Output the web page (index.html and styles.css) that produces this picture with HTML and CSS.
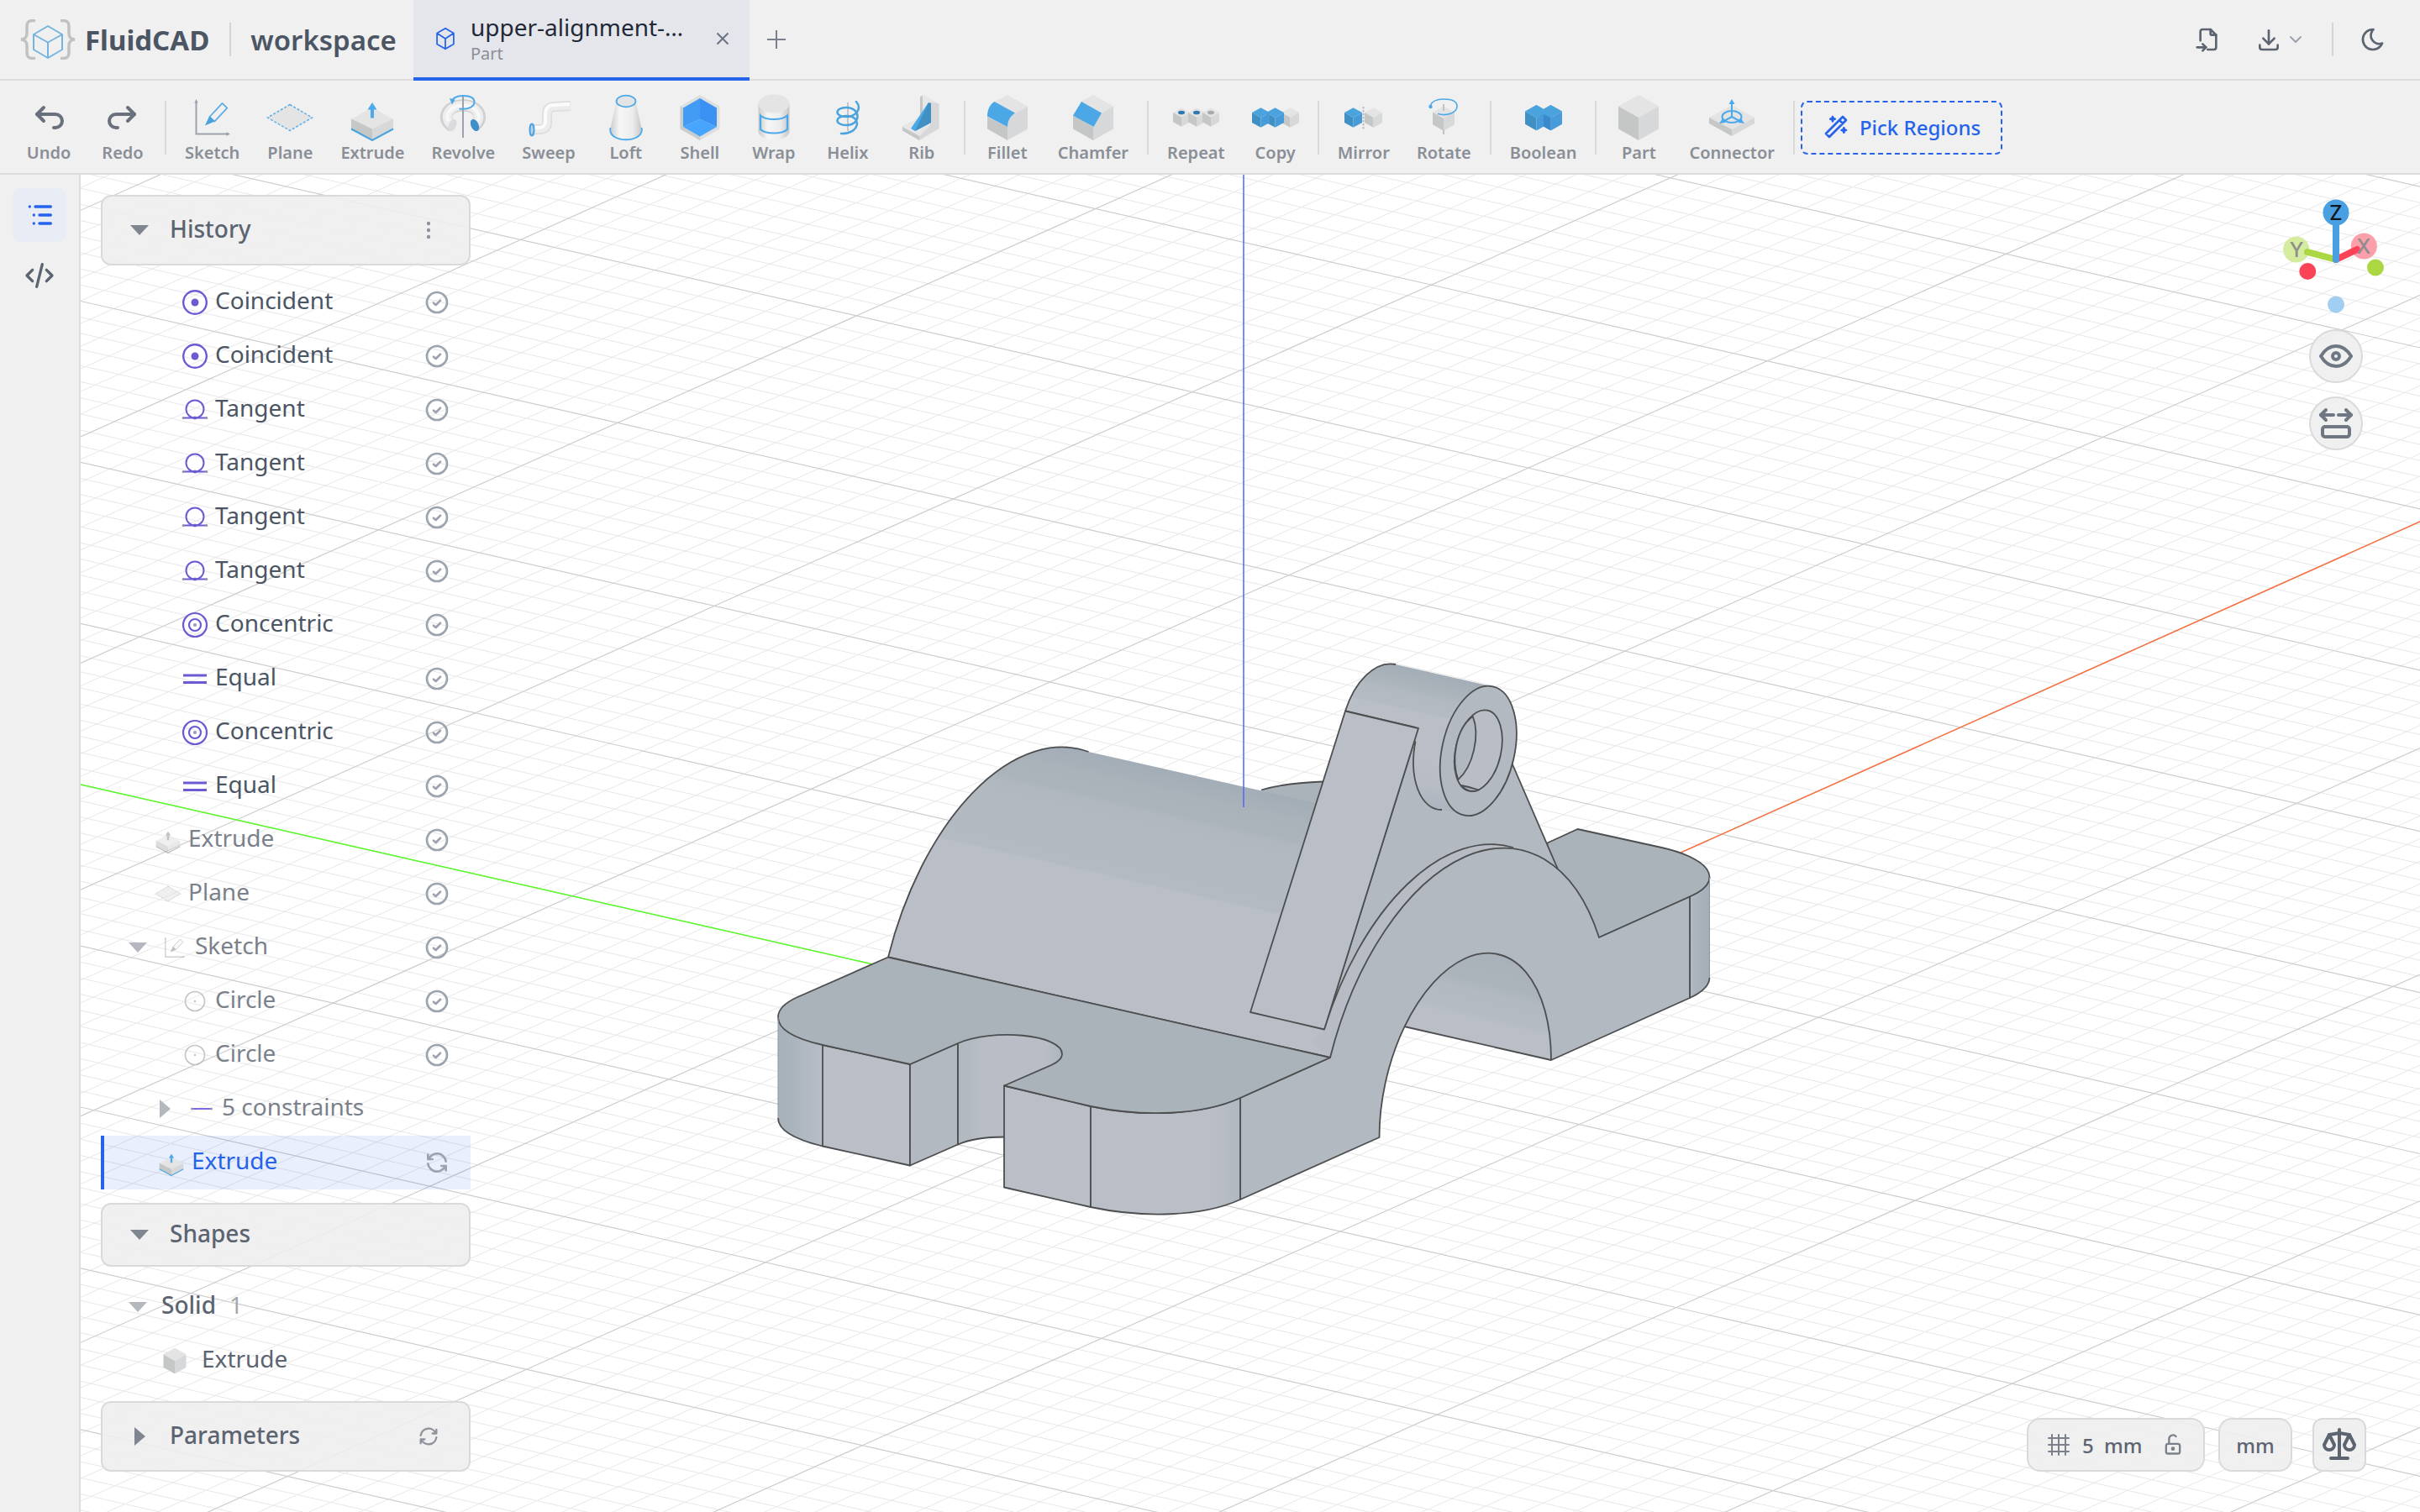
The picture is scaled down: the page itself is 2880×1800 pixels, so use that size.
FILE: index.html
```html
<!DOCTYPE html>
<html lang="en">
<head>
<meta charset="utf-8">
<title>FluidCAD – workspace</title>
<link rel="stylesheet" href="styles.css">
</head>
<body>
<svg class="sprite" aria-hidden="true">
  <defs>
    <linearGradient id="tube" x1="0" y1="0" x2="1" y2="0"><stop offset="0" stop-color="#c9cacb"/><stop offset=".3" stop-color="#f6f6f6"/><stop offset=".7" stop-color="#ededee"/><stop offset="1" stop-color="#c4c5c6"/></linearGradient>
  </defs>
  <symbol id="cube" viewBox="0 0 48 54"><path fill="#e4e4e5" d="M24 0l24 13.500-24 13.500-24-13.500z"/><path fill="#c5c7c7" d="M0 13.500l24 13.500v27L0 40.500z"/><path fill="#d7d8da" d="M48 13.500L24 27v27l24-13.500z"/></symbol>
  <symbol id="cube-blue" viewBox="0 0 48 54"><path fill="#4ba3de" d="M24 0l24 13.500-24 13.500-24-13.500z"/><path fill="#4190c4" d="M0 13.500l24 13.500v27L0 40.500z"/><path fill="#479bd8" d="M48 13.500L24 27v27l24-13.500z"/></symbol>
  <symbol id="undo" viewBox="0 0 24 24"><g class="line"><path d="M9 14l-4-4 4-4"/><path d="M5 10h11a4 4 0 1 1 0 8h-1"/></g></symbol>
  <symbol id="redo" viewBox="0 0 24 24"><g class="line"><path d="M15 14l4-4-4-4"/><path d="M19 10H8a4 4 0 1 0 0 8h1"/></g></symbol>
  <symbol id="sketch" viewBox="0 0 56 56"><g fill="none" stroke="#9ca1ab" stroke-width="2"><path d="M8.500 9v38.500H47"/></g><path fill="#9ca1ab" d="M8.500 6l2.200 4.500H6.300zM49 47.500l-4.500 2.200v-4.400z"/><path fill="none" stroke="#5aabe4" stroke-width="1.700" stroke-linejoin="round" d="M24.500 27l15-16.200 5.800 5.800-15 16z"/><path fill="#4ba3de" d="M19 37.500l5.200-11.500 6.500 6.500z"/></symbol>
  <symbol id="plane" viewBox="0 0 56 56"><path fill="#e4e4e5" stroke="#63b0e6" stroke-width="1.600" stroke-dasharray="3 2" d="M28 12.500L54.500 28 28 43.500 1.500 28z"/></symbol>
  <symbol id="extrude" viewBox="0 0 56 56"><path fill="#e4e4e5" d="M28 16l25 14-25 13L3 30z"/><path fill="#c5c7c7" d="M3 29.500L28 41.500V55L3 41.500z"/><path fill="#d7d8da" d="M53 29.500L28 41.500V55l25-13.500z"/><path fill="none" stroke="#4ba3de" stroke-width="2" d="M3 41.500L28 55l25-13.500"/><path fill="#4ca9ea" d="M28 10l5.500 8.500H30V28.500h-4V18.500h-3.500z"/></symbol>
  <symbol id="revolve" viewBox="0 0 56 56"><path fill="none" stroke="#cfd0d1" stroke-width="14.500" d="M15 38C2 30 8 13.500 28 13.500S54 30 41 38"/><path fill="none" stroke="#ededee" stroke-width="11" d="M15 37C4 30 9 13.500 28 13.500S52 30 41 37"/><path fill="none" stroke="#f8f8f8" stroke-width="4" d="M11 32C6 26 12 13.500 28 13.500S50 26 45 32"/><ellipse cx="15.500" cy="37" rx="4.500" ry="7.500" transform="rotate(25 15.500 37)" fill="#dadbdc"/><ellipse cx="42" cy="37" rx="4.500" ry="7.500" transform="rotate(-25 42 37)" fill="#3f8fc9"/><path stroke="#9ca1ab" stroke-width="2" d="M28 3v49"/><path fill="none" stroke="#4ca9ea" stroke-width="2" d="M23.500 17.500C34 19 41.500 15 41.500 9.500S36 2 28 2 15 5 15 9.500"/><path fill="#4ca9ea" d="M12 5l6.500 1.500-3.500 6z"/></symbol>
  <symbol id="sweep" viewBox="0 0 56 56"><path fill="none" stroke="#dcdcdd" stroke-width="12" d="M7 42h9c8 0 10-3 10-9v-8c0-7 3-10 10-10l18-1"/><path fill="none" stroke="#ececed" stroke-width="9" d="M7 42h9c8 0 10-3 10-9v-8c0-7 3-10 10-10l18-1"/><path fill="none" stroke="#fbfbfb" stroke-width="4" d="M7 40h8c7 0 9-3 9-8v-8c0-8 4-11 11-11l18-1"/><ellipse cx="8" cy="42.500" rx="2.500" ry="7" fill="#bcd3e4" stroke="#4ba3de" stroke-width="2"/></symbol>
  <symbol id="loft" viewBox="0 0 56 56"><path fill="url(#tube)" d="M16.500 9L9 43c0 15 38 15 38 0L39.500 9z"/><path fill="none" stroke="#4ca9ea" stroke-width="1.800" d="M9.500 40C5 59 51 59 46.500 40"/><ellipse cx="28" cy="8.500" rx="11.500" ry="6.800" fill="#e4e4e5" stroke="#4ca9ea" stroke-width="1.800"/></symbol>
  <symbol id="shell" viewBox="0 0 56 56"><path fill="#dddedf" d="M28 1l23.500 13.500v27L28 55 4.500 41.500v-27z"/><path fill="#cbcdcd" d="M4.500 14.500L8 16.500V39l20 11.500V55L4.500 41.500z"/><path fill="#439cf3" d="M28 5v25L8 39V16.500z"/><path fill="#3c92f3" d="M28 5l20 11.500V39L28 30z"/><path fill="#48a5fd" d="M28 30l20 9-20 11.500L8 39z"/></symbol>
  <symbol id="wrap" viewBox="0 0 56 56"><path fill="url(#tube)" d="M9.500 12v32c0 14 37 14 37 0V12z"/><ellipse cx="28" cy="11.500" rx="18.500" ry="11" fill="#e4e4e5"/><path fill="none" stroke="#4ca9ea" stroke-width="2.200" d="M12 25.500c6 6 26 6 32 0V42c-6 6-26 6-32 0z"/></symbol>
  <symbol id="helix" viewBox="0 0 56 56"><path stroke="#c3c5c8" stroke-width="2" d="M28 10v34"/><path fill="none" stroke="#4ba3de" stroke-width="2.500" stroke-linecap="round" d="M38 9c7 8 0 18-12 18-14 0-14-11 0-11 18 0 18 21 0 21-14 0-14-11 0-11 20 0 16 22-6 21"/></symbol>
  <symbol id="rib" viewBox="0 0 56 56"><path fill="#e7e7e8" d="M30 1l18.500 10.500v29L25 55 5 43.500v-5L26 27V3.500z"/><path fill="#c5c7c7" d="M26 3.500l3-2V26l-3 2zM5 39l20 11v5L5 43.500z"/><path fill="#d7d8da" d="M48.500 11.500L38 9v28l-13 13v5l23.500-14z"/><path fill="#4ca9e8" d="M36 10l1 25-17 9-5-3z"/><path fill="#4190c4" d="M36 10l3 1v23L20 44z"/></symbol>
  <symbol id="fillet" viewBox="0 0 56 56"><path fill="#e4e4e5" d="M28 1l24 13.500L37 23 12 9.500z"/><path fill="#c5c7c7" d="M4 27l24 12v16L4 41.500z"/><path fill="#d7d8da" d="M52 14.500L37 23c-6 4-9 9-9 16v16l24-13.500z"/><path fill="#4ba7e6" d="M12.500 9L37 22.500C31 27 28 32 28 39L4 26.500C4 19 7 12 12.500 9z"/></symbol>
  <symbol id="chamfer" viewBox="0 0 56 56"><path fill="#e4e4e5" d="M28 1l24 13.500L37 23 12 9.500z"/><path fill="#c5c7c7" d="M4 25l24 14v16L4 41.500z"/><path fill="#d7d8da" d="M52 14.500L37 23l-9 16v16l24-13.500z"/><path fill="#4ba7e6" d="M14 9l24 13.500L28.500 39 4 25.500z"/></symbol>
  <symbol id="repeat" viewBox="0 0 56 56"><use href="#cube" x="1" y="16" width="20" height="23"/><use href="#cube" x="19" y="16" width="20" height="23"/><use href="#cube" x="36" y="16" width="20" height="23"/><g fill="#2d79b0"><ellipse cx="11" cy="22" rx="4" ry="2.300"/><ellipse cx="29" cy="22" rx="4" ry="2.300"/></g><ellipse cx="46" cy="22" rx="4" ry="2.300" fill="#a9aaab"/></symbol>
  <symbol id="copy" viewBox="0 0 56 56"><use href="#cube" x="35" y="16" width="21" height="24"/><use href="#cube-blue" x="17" y="16" width="21" height="24"/><use href="#cube-blue" x="0" y="16" width="21" height="24"/></symbol>
  <symbol id="mirror" viewBox="0 0 56 56"><use href="#cube-blue" x="5" y="16" width="21" height="24"/><use href="#cube" x="29" y="16" width="21" height="24"/><path stroke="#b5b7ba" stroke-width="1.800" stroke-dasharray="2.500 1.500" d="M27.500 15v27"/></symbol>
  <symbol id="rotate" viewBox="0 0 56 56"><use href="#cube" x="15" y="14" width="26" height="30"/><path stroke="#b5b7ba" stroke-width="1.600" d="M28 12v8M28 43v5"/><path fill="none" stroke="#4ca9ea" stroke-width="1.600" d="M21 23.500C34 27 44 21 44 14.500S37 6 28 6s-14 2.500-16 8"/><circle cx="12.500" cy="15" r="2.200" fill="#4ca9ea"/></symbol>
  <symbol id="boolean" viewBox="0 0 56 56"><use href="#cube-blue" x="23" y="13" width="27" height="30.500"/><use href="#cube-blue" x="6" y="13" width="27" height="30.500"/><path fill="#4ba3de" d="M19.500 13l8.500 5 8.500-5L50 20.500 36.500 28 28 24l-8.500 4L6 20.500z"/><path fill="#3a89cc" d="M28 24l8.500 4v15L28 38.500z"/></symbol>
  <symbol id="part" viewBox="0 0 56 56"><use href="#cube" x="4" y="1" width="48" height="54"/></symbol>
  <symbol id="connector" viewBox="0 0 56 56"><path fill="#e4e4e5" d="M28 13l27 15-27 14L1 28z"/><path fill="#c5c7c7" d="M1 28l27 14v8L1 35z"/><path fill="#d7d8da" d="M55 28L28 42v8l27-15z"/><g fill="none" stroke="#4ca9ea" stroke-width="2"><ellipse cx="28" cy="27" rx="11.500" ry="7"/><path d="M28 27V10M28 27l-11 6M28 27l11 6"/></g><path fill="#4ca9ea" d="M28 6l3.500 6h-7zM13 35l4-6 3.500 5zM43 35l-4-6-3.500 5z"/></symbol>
  <symbol id="wand" viewBox="0 0 24 24"><g class="line"><path d="M6 21L21 6l-3-3L3 18l3 3M15 6l3 3M9 3a2 2 0 0 0 2 2 2 2 0 0 0-2 2 2 2 0 0 0-2-2 2 2 0 0 0 2-2M19 13a2 2 0 0 0 2 2 2 2 0 0 0-2 2 2 2 0 0 0-2-2 2 2 0 0 0 2-2"/></g></symbol>
  <symbol id="box" viewBox="0 0 24 24"><g class="line thin"><path d="M12 1.500l8.500 5v11l-8.500 5-8.500-5v-11zM12 12l8.500-5.500M12 12v10.500M12 12L3.500 6.500"/></g></symbol>
  <symbol id="check" viewBox="0 0 24 24"><g class="line"><circle cx="12" cy="12" r="9"/><path d="M9 12.500l2 1.800 4-4"/></g></symbol>
  <symbol id="refresh" viewBox="0 0 24 24"><g class="line"><path d="M20 11A8.100 8.100 0 0 0 4.500 9M4 5v4h4M4 13a8.100 8.100 0 0 0 15.500 2m.5 4v-4h-4"/></g></symbol>
  <symbol id="down" viewBox="0 0 24 24"><path fill="currentColor" d="M1 6h22L12 18z"/></symbol>
  <symbol id="right" viewBox="0 0 24 24"><path fill="currentColor" d="M6 1v22l13-11z"/></symbol>
  <symbol id="coincident" viewBox="0 0 32 32"><circle cx="16" cy="16" r="13.800" fill="none" stroke="#6b5bd2" stroke-width="2.400"/><circle cx="16" cy="16" r="4.500" fill="#6b5bd2"/></symbol>
  <symbol id="tangent" viewBox="0 0 32 32"><circle cx="16" cy="15" r="10.500" fill="none" stroke="#6b5bd2" stroke-width="2"/><path stroke="#6b5bd2" stroke-width="2" d="M2 25.500h28"/><circle cx="16" cy="25.500" r="2" fill="#6b5bd2"/><circle cx="2.200" cy="25.500" r="1.600" fill="#9095a5"/><circle cx="29.800" cy="25.500" r="1.600" fill="#9095a5"/></symbol>
  <symbol id="concentric" viewBox="0 0 32 32"><g fill="none" stroke="#6b5bd2" stroke-width="2.200"><circle cx="16" cy="16" r="14"/><circle cx="16" cy="16" r="7"/></g><circle cx="16" cy="16" r="2" fill="#9a97b8"/></symbol>
  <symbol id="equal" viewBox="0 0 32 32"><path stroke="#6b5bd2" stroke-width="3" d="M2 12h28M2 20.500h28"/></symbol>
  <symbol id="circle" viewBox="0 0 32 32"><circle cx="16" cy="16" r="11.500" fill="none" stroke="#c2c3c5" stroke-width="1.600"/><circle cx="16" cy="16" r="1.200" fill="#c2c3c5"/></symbol>
  <symbol id="constraint" viewBox="0 0 32 32"><path stroke="#7a6be0" stroke-width="2" d="M4 16h24"/><circle cx="4.500" cy="16" r="1.600" fill="#9a97b8"/><circle cx="27.500" cy="16" r="1.600" fill="#9a97b8"/></symbol>
</svg>

<div class="app">
  <header class="titlebar">
    <div class="brand">
      <svg class="logo" viewBox="0 0 66 48"><g fill="none" stroke="#c1c1c2" stroke-width="3.500"><path d="M18 1.500h-3c-5 0-7 2-7 7v8c0 5-2 7-7 7.500 5 .5 7 2.500 7 7.500v8c0 5 2 7 7 7h3"/><path d="M48 1.500h3c5 0 7 2 7 7v8c0 5 2 7 7 7.500-5 .5-7 2.500-7 7.500v8c0 5-2 7-7 7h-3"/></g><path fill="none" stroke="#76b4e0" stroke-width="2" stroke-linejoin="round" d="M33 8l17 10v18L33 46 16 36V18zM33 27.500L50 18M33 27.500V46M33 27.500L16 18"/></svg>
      <span class="brand-name">FluidCAD</span>
      <span class="rule"></span>
      <span class="project">workspace</span>
    </div>
    <div class="tab">
      <svg class="i28 accent"><use href="#box"/></svg>
      <div class="tab-text"><span class="tab-title">upper-alignment-…</span><span class="tab-kind">Part</span></div>
      <button class="tab-close" aria-label="Close tab"><svg viewBox="0 0 16 16"><path d="M1.500 1.500l13 13M14.500 1.500l-13 13"/></svg></button>
    </div>
    <button class="square" aria-label="New tab"><svg class="plus" viewBox="0 0 22 22"><path d="M11 0v22M0 11h22"/></svg></button>
    <div class="actions">
      <button class="square" aria-label="Import file"><svg class="i32" viewBox="0 0 24 24"><g class="line"><path d="M14 3v4a1 1 0 0 0 1 1h4"/><path d="M5 13V5a2 2 0 0 1 2-2h7l5 5v11a2 2 0 0 1-2 2h-5.500M2 19h8"/><path d="M7 16l3 3-3 3"/></g></svg></button>
      <button class="export" aria-label="Export"><svg class="i32" viewBox="0 0 24 24"><g class="line"><path d="M4 17v2a2 2 0 0 0 2 2h12a2 2 0 0 0 2-2v-2"/><path d="M7 11l5 5 5-5"/><path d="M12 4v12"/></g></svg><svg class="i24 faint" viewBox="0 0 24 24"><g class="line"><path d="M6 9l6 6 6-6"/></g></svg></button>
      <span class="rule"></span>
      <button class="square" aria-label="Dark mode"><svg class="i32" viewBox="0 0 24 24"><g class="line"><path d="M12 3h.4a7.500 7.500 0 0 0 7.900 12.400A9 9 0 1 1 12 3z"/></g></svg></button>
    </div>
  </header>

  <nav class="toolbar" aria-label="Tools">
    <button class="tool"><svg><use href="#undo" x="4" y="4" width="48" height="48"/></svg>Undo</button>
    <button class="tool"><svg><use href="#redo" x="4" y="4" width="48" height="48"/></svg>Redo</button>
    <span class="sep"></span>
    <button class="tool"><svg><use href="#sketch"/></svg>Sketch</button>
    <button class="tool"><svg><use href="#plane"/></svg>Plane</button>
    <button class="tool"><svg><use href="#extrude"/></svg>Extrude</button>
    <button class="tool"><svg><use href="#revolve"/></svg>Revolve</button>
    <button class="tool"><svg><use href="#sweep"/></svg>Sweep</button>
    <button class="tool"><svg><use href="#loft"/></svg>Loft</button>
    <button class="tool"><svg><use href="#shell"/></svg>Shell</button>
    <button class="tool"><svg><use href="#wrap"/></svg>Wrap</button>
    <button class="tool"><svg><use href="#helix"/></svg>Helix</button>
    <button class="tool"><svg><use href="#rib"/></svg>Rib</button>
    <span class="sep"></span>
    <button class="tool"><svg><use href="#fillet"/></svg>Fillet</button>
    <button class="tool"><svg><use href="#chamfer"/></svg>Chamfer</button>
    <span class="sep"></span>
    <button class="tool"><svg><use href="#repeat"/></svg>Repeat</button>
    <button class="tool"><svg><use href="#copy"/></svg>Copy</button>
    <span class="sep"></span>
    <button class="tool"><svg><use href="#mirror"/></svg>Mirror</button>
    <button class="tool"><svg><use href="#rotate"/></svg>Rotate</button>
    <span class="sep"></span>
    <button class="tool"><svg><use href="#boolean"/></svg>Boolean</button>
    <span class="sep"></span>
    <button class="tool"><svg><use href="#part"/></svg>Part</button>
    <button class="tool"><svg><use href="#connector"/></svg>Connector</button>
    <span class="sep"></span>
    <button class="pick"><svg class="i32"><use href="#wand"/></svg>Pick Regions</button>
  </nav>

  <div class="body">
    <nav class="rail" aria-label="Panels">
      <button class="square on" aria-label="Model tree"><svg class="i40" viewBox="0 0 24 24"><g class="line"><path d="M9 6h11M12 12h8M12 18h8M5 6v.01M8 12v.01M8 18v.01"/></g></svg></button>
      <button class="square" aria-label="Code"><svg class="i40" viewBox="0 0 24 24"><g class="line"><path d="M7 8l-4 4 4 4M17 8l4 4-4 4M14 4l-4 16"/></g></svg></button>
    </nav>

    <main class="viewport">
      <svg class="scene" viewBox="96 208 2784 1592" preserveAspectRatio="xMidYMid slice" role="img" aria-label="Upper alignment part">
        <defs>
          <linearGradient id="saddle" gradientUnits="userSpaceOnUse" x1="1295" y1="895" x2="1231" y2="1179"><stop offset="0" stop-color="#a3adb7"/><stop offset=".07" stop-color="#a8b1b9"/><stop offset=".1" stop-color="#abb3ba"/><stop offset=".17" stop-color="#acb4bb"/><stop offset=".19" stop-color="#b0b7be"/><stop offset=".25" stop-color="#b2b9c1"/><stop offset=".47" stop-color="#b3bac2"/><stop offset=".48" stop-color="#babec7"/><stop offset="1" stop-color="#babec7"/></linearGradient>
          <linearGradient id="boss" gradientUnits="userSpaceOnUse" x1="1720" y1="804" x2="1703" y2="880"><stop offset="0" stop-color="#a3adb7"/><stop offset=".25" stop-color="#abb3ba"/><stop offset=".4" stop-color="#b2b9c1"/><stop offset=".62" stop-color="#b4bbc3"/><stop offset=".65" stop-color="#babec7"/></linearGradient>
          <linearGradient id="bossLow" gradientUnits="userSpaceOnUse" x1="1700" y1="900" x2="1690" y2="968"><stop offset="0" stop-color="#babec7"/><stop offset=".5" stop-color="#b7bcc5"/><stop offset="1" stop-color="#a9b2bb"/></linearGradient>
          <linearGradient id="tunnel" gradientUnits="userSpaceOnUse" x1="1790" y1="1135" x2="1764" y2="1245"><stop offset="0" stop-color="#a8b1b9"/><stop offset=".35" stop-color="#acb4bb"/><stop offset=".45" stop-color="#b2b9c1"/><stop offset=".68" stop-color="#b4bbc3"/><stop offset=".75" stop-color="#babec7"/></linearGradient>
          <linearGradient id="cornerL"><stop offset="0" stop-color="#a6b1bb"/><stop offset=".35" stop-color="#aab4bc"/><stop offset=".6" stop-color="#b1b8c1"/><stop offset="1" stop-color="#b8bdc6"/></linearGradient>
          <linearGradient id="slot"><stop offset="0" stop-color="#b1b8c0"/><stop offset=".25" stop-color="#b9bdc6"/><stop offset=".8" stop-color="#b9bdc6"/><stop offset="1" stop-color="#a9b2ba"/></linearGradient>
          <linearGradient id="cornerF"><stop offset="0" stop-color="#babec7"/><stop offset=".8" stop-color="#babec7"/><stop offset=".9" stop-color="#b6bbc4"/><stop offset="1" stop-color="#b1b8c0"/></linearGradient>
          <linearGradient id="cornerR"><stop offset="0" stop-color="#b0b8c0"/><stop offset="1" stop-color="#a4aeb8"/></linearGradient>
        </defs>
        <g class="grid" id="grid"></g>
        <path class="axis-y" d="M1480 1248L96 934"/>
        <path class="axis-x" d="M1480 1248L2880 621"/>

        <g class="edges">
          <!-- far rim of the saddle -->
          <path fill="#aab3ba" stroke="none" d="M1500 941Q1530 932 1574 931L1600 960 1560 960z"/>
          <path fill="none" d="M1501 940.500Q1530 932 1574 930.500"/>
          <!-- saddle body -->
          <path fill="url(#saddle)" stroke="none" d="M1057 1139.500A304 167 -77.200 0 1 1295.500 895L1690 984 1583 1259z"/>
          <path fill="none" d="M1583 1259L1057 1139.500A304 167 -77.200 0 1 1295.500 895"/>
          <!-- right flange -->
          <path fill="#abb3ba" d="M1841.500 1003.500L1877.500 987 1977.500 1009C2008 1016 2034.500 1028 2034.500 1044.500C2034.500 1053 2026 1061 2011 1067.500L1903 1116 1840 1060z"/>
          <path fill="url(#cornerR)" stroke="none" d="M2011 1067.500C2026 1061 2034.500 1053 2034.500 1044.500V1164C2034.500 1173 2026 1181 2011 1188z"/>
          <path fill="none" d="M2034.500 1044.500C2034.500 1053 2026 1061 2011 1067.500V1188C2026 1181 2034.500 1173 2034.500 1164"/>
          <path stroke="#8f979f" stroke-width="1" d="M2034.500 1044.500V1164"/>
          <!-- tunnel interior -->
          <path fill="url(#tunnel)" stroke="none" d="M1650 1217L1846 1262 1862 1230 1800 1120H1700z"/>
          <path fill="none" d="M1671 1222L1846 1262"/>
          <!-- rib side face -->
          <path fill="#b2b9c1" d="M1688 867L1576 1225C1600 1150 1690 1010 1790 1008L1854.500 1036 1800 910 1760 880z"/>
          <path fill="#b7bcc4" stroke="none" d="M1576 1226A304 167 -77.200 0 1 1801 1009L1790 1010A304 167 -77.200 0 0 1583 1259L1560 1240z"/>
          <path fill="none" d="M1576 1225A304 167 -77.200 0 1 1801 1009"/>
          <!-- front arch face with the long side wall -->
          <path fill="#b2b9c1" d="M1583 1259A304 167 -77.200 0 1 1903 1116L2011 1067.500V1188L1846 1262A170 93.400 -77.200 0 0 1641.500 1354L1476 1428V1307z"/>
          <!-- hinge boss -->
          <path fill="url(#bossLow)" stroke="none" d="M1686 870A78.500 43 -77.200 0 0 1716 964L1745 970 1780 890z"/>
          <path fill="none" d="M1685 880A78.500 43 -77.200 0 0 1716 964"/>
          <path fill="url(#boss)" stroke="none" d="M1601 846.500C1612 812 1636 786 1661 791L1775 817 1780 880 1688 867z"/>
          <path fill="none" d="M1688 867L1601 846.500C1612 812 1636 786 1661 791"/>
          <path fill="url(#boss)" stroke="none" d="M1683 880L1692 820H1760V900L1712 920z"/>
          <ellipse cx="1759.300" cy="893.900" rx="78.500" ry="43.100" transform="rotate(-77.200 1759.300 893.900)" fill="#b2b9c1"/>
          <ellipse cx="1759.300" cy="893.700" rx="49.200" ry="27" transform="rotate(-77.200 1759.300 893.700)" fill="#b9bdc6"/>
          <path fill="#b1b8c0" d="M1752.700 852.700A49.200 27 -77.200 0 1 1735.300 928.200C1727 905 1732 868 1752.700 852.700z"/>
          <path fill="#abb3ba" d="M1739 935Q1750 937 1760 940.500Q1748 945 1739 935z"/>
          <!-- rib front face -->
          <path fill="#babec7" d="M1601 846.500L1688 867 1576 1225.500 1488 1205z"/>
          <!-- left flange walls -->
          <path fill="url(#cornerL)" stroke="none" d="M926 1211C926 1226 948 1237 979 1244V1364.500C948 1357 926 1346 926 1331z"/>
          <path fill="none" d="M979 1364.500C948 1357 926 1346 926 1331"/>
          <path fill="#babec7" d="M979 1244l104 23v120.500l-104-23z"/>
          <path fill="#b2b9c1" d="M1083 1267l57-25v120.500l-57 25z"/>
          <path fill="url(#slot)" stroke="none" d="M1140 1242C1160 1222 1270 1218 1270 1255L1240 1280 1195 1300V1353.500C1175 1353.500 1155 1356 1140 1362.500z"/>
          <path fill="none" d="M1140 1242V1362.500C1155 1356 1175 1353.500 1195 1353.500"/>
          <path fill="#babec7" d="M1195 1292.500l103 24.500v120l-103-23.500z"/>
          <path fill="url(#cornerF)" d="M1298 1317C1360 1330 1430 1328 1476 1307V1428C1430 1449 1360 1450 1298 1437z"/>
          <!-- left flange top -->
          <path fill="#abb3ba" d="M1057 1139.500L948 1187.500C934 1194 926 1202 926 1211C926 1226 948 1237 979 1244L1083 1267 1140 1242C1180 1224 1264 1231 1264 1255C1264 1260 1260 1264 1251 1268L1195 1292.500 1298 1317C1360 1330 1430 1328 1476 1307L1583 1259z"/>
          <path stroke="#8f979f" stroke-width="1" d="M926 1211V1331"/>
        </g>
        <path class="axis-z" d="M1480 208V961"/>
      </svg>

      <aside class="panel">
        <section>
          <header class="section-head"><svg class="i24"><use href="#down"/></svg><h2>History</h2><button class="mini" aria-label="History options"><svg class="i24" viewBox="0 0 24 24"><g fill="currentColor"><circle cx="12" cy="4" r="2.200"/><circle cx="12" cy="12" r="2.200"/><circle cx="12" cy="20" r="2.200"/></g></svg></button></header>
          <ul class="tree history">
            <li class="l3"><svg><use href="#coincident"/></svg><span>Coincident</span><svg class="status"><use href="#check"/></svg></li>
            <li class="l3"><svg><use href="#coincident"/></svg><span>Coincident</span><svg class="status"><use href="#check"/></svg></li>
            <li class="l3"><svg><use href="#tangent"/></svg><span>Tangent</span><svg class="status"><use href="#check"/></svg></li>
            <li class="l3"><svg><use href="#tangent"/></svg><span>Tangent</span><svg class="status"><use href="#check"/></svg></li>
            <li class="l3"><svg><use href="#tangent"/></svg><span>Tangent</span><svg class="status"><use href="#check"/></svg></li>
            <li class="l3"><svg><use href="#tangent"/></svg><span>Tangent</span><svg class="status"><use href="#check"/></svg></li>
            <li class="l3"><svg><use href="#concentric"/></svg><span>Concentric</span><svg class="status"><use href="#check"/></svg></li>
            <li class="l3"><svg><use href="#equal"/></svg><span>Equal</span><svg class="status"><use href="#check"/></svg></li>
            <li class="l3"><svg><use href="#concentric"/></svg><span>Concentric</span><svg class="status"><use href="#check"/></svg></li>
            <li class="l3"><svg><use href="#equal"/></svg><span>Equal</span><svg class="status"><use href="#check"/></svg></li>
            <li class="l2 muted"><svg class="gray"><use href="#extrude"/></svg><span>Extrude</span><svg class="status"><use href="#check"/></svg></li>
            <li class="l2 muted"><svg class="gray"><use href="#plane"/></svg><span>Plane</span><svg class="status"><use href="#check"/></svg></li>
            <li class="l1 muted"><svg class="twist"><use href="#down"/></svg><svg class="gray"><use href="#sketch"/></svg><span>Sketch</span><svg class="status"><use href="#check"/></svg></li>
            <li class="l3 muted"><svg><use href="#circle"/></svg><span>Circle</span><svg class="status"><use href="#check"/></svg></li>
            <li class="l3 muted"><svg><use href="#circle"/></svg><span>Circle</span><svg class="status"><use href="#check"/></svg></li>
            <li class="l2 muted"><svg class="twist"><use href="#right"/></svg><svg><use href="#constraint"/></svg><span>5 constraints</span></li>
            <li class="l2 selected"><svg><use href="#extrude"/></svg><span>Extrude</span><svg class="status"><use href="#refresh"/></svg></li>
          </ul>
        </section>
        <section>
          <header class="section-head"><svg class="i24"><use href="#down"/></svg><h2>Shapes</h2></header>
          <ul class="tree shapes">
            <li class="l1 group"><svg class="twist"><use href="#down"/></svg><span>Solid</span><span class="count">1</span></li>
            <li class="l2 shape"><svg><use href="#part"/></svg><span>Extrude</span></li>
          </ul>
        </section>
        <section>
          <header class="section-head"><svg class="i24"><use href="#right"/></svg><h2>Parameters</h2><button class="mini flip" aria-label="Reset parameters"><svg class="i28"><use href="#refresh"/></svg></button></header>
        </section>
      </aside>

      <div class="view-tools">
        <svg class="gizmo" viewBox="0 0 160 144"><g stroke-width="8" stroke-linecap="round"><circle cx="80" cy="130.500" r="10" fill="#a2cff1"/><circle cx="32.700" cy="65" r="15.500" fill="#d5eb9f"/><circle cx="113.300" cy="61" r="15.500" fill="#fb9fab"/><path stroke="#abd742" d="M80 77L46 68"/><path stroke="#fb4358" d="M80 77l25-12"/><path stroke="#48a0e3" d="M80 77V36"/><circle cx="46.300" cy="91" r="10" fill="#fb4358"/><circle cx="127" cy="86.500" r="10" fill="#abd742"/><circle cx="80" cy="21" r="15.500" fill="#48a0e3"/></g><text x="80" y="30">Z</text><text x="113" y="70" class="back">X</text><text x="33" y="74" class="back">Y</text></svg>
        <button class="round" aria-label="Visibility"><svg class="i48" viewBox="0 0 24 24"><g class="line"><circle cx="12" cy="12" r="2"/><path d="M21 12c-2.400 4-5.400 6-9 6s-6.600-2-9-6c2.400-4 5.400-6 9-6s6.600 2 9 6"/></g></svg></button>
        <button class="round" aria-label="Measure"><svg class="i48" viewBox="0 0 24 24"><g class="line"><path d="M3 7h7.500"/><path d="M6 4L3 7l3 3"/><path d="M13.500 7H21"/><path d="M18 4l3 3-3 3"/><rect x="4" y="14" width="16" height="6" rx="1.500"/></g></svg></button>
      </div>

      <div class="status-bar">
        <div class="pill snap"><svg class="i32" viewBox="0 0 24 24"><g class="line thin"><path d="M3 6h18M3 12h18M3 18h18"/><path d="M6 3v18M12 3v18M18 3v18"/></g></svg><label><input value="5" aria-label="Grid size">mm</label><button class="lock" aria-label="Unlock grid"><svg class="i28" viewBox="0 0 24 24"><g class="line"><rect x="5" y="11" width="14" height="10" rx="2"/><circle cx="12" cy="16" r="1"/><path d="M8 11V6a4 4 0 0 1 7-2.500"/></g></svg></button></div>
        <button class="pill unit">mm</button>
        <button class="pill weigh" aria-label="Mass properties"><svg class="i48" viewBox="0 0 24 24"><g class="line"><path d="M7 20h10"/><path d="M6 6l6-1 6 1"/><path d="M12 3v17"/><path d="M9 12L6 6l-3 6a3 3 0 0 0 6 0"/><path d="M21 12l-3-6-3 6a3 3 0 0 0 6 0"/></g></svg></button>
      </div>
    </main>
  </div>
</div>
<script src="grid.js"></script>
</body>
</html>
```
FILE: styles.css
```css
* { box-sizing: border-box; }
body {
  margin: 0;
  font-family: "Noto Sans", "Open Sans", sans-serif;
  font-size: 28px;
  color: #4b5563;
  background: #fff;
}
button {
  font: inherit;
  color: inherit;
  background: none;
  border: 0;
  padding: 0;
  display: flex;
  align-items: center;
  justify-content: center;
}
svg { display: block; flex: none; }
.sprite { position: absolute; width: 0; height: 0; }
.line { fill: none; stroke: currentColor; stroke-width: 2; stroke-linecap: round; stroke-linejoin: round; }
.thin { stroke-width: 1.5; }
.i24 { width: 24px; height: 24px; }
.i28 { width: 28px; height: 28px; }
.i32 { width: 32px; height: 32px; }
.i40 { width: 40px; height: 40px; }
.i48 { width: 48px; height: 48px; }
.accent { color: #2563eb; }
.faint { color: #9ca3af; }

.app { min-height: 100vh; display: flex; flex-direction: column; }

/* title bar */
.titlebar {
  height: 96px;
  display: flex;
  background: #f0f0f0;
  border-bottom: 2px solid #dcdcdd;
}
.brand { display: flex; align-items: center; padding: 0 20px 0 24px; font-size: 33px; }
.logo { width: 66px; height: 48px; }
.brand-name { font-weight: 700; margin-left: 11px; }
.project { font-weight: 600; }
.rule { width: 2px; height: 40px; margin: 0 23px 0 24px; background: #d4d4d5; }
.tab {
  width: 400px;
  height: 96px;
  padding: 0 16px 0 24px;
  display: flex;
  align-items: center;
  gap: 16px;
  background: #e5e6eb;
  border-bottom: 4px solid #2563eb;
}
.tab-text { flex: 1; display: flex; flex-direction: column; }
.tab-title { line-height: 36px; color: #1f2937; white-space: nowrap; }
.tab-kind { font-size: 20px; line-height: 28px; color: #8b8f96; }
.tab-close { width: 32px; height: 32px; }
.tab-close svg { width: 16px; height: 16px; fill: none; stroke: #6b7280; stroke-width: 2; }
.square { width: 64px; height: 64px; align-self: center; border-radius: 10px; color: #5b6470; }
.plus { width: 22px; height: 22px; stroke: #7b818b; stroke-width: 2; }
.actions { margin-left: auto; display: flex; align-items: center; gap: 8px; padding-right: 24px; color: #5b6470; }
.actions .rule { margin: 0 7px; }
.export { height: 64px; padding: 0 16px; gap: 4px; }

/* tool bar */
.toolbar {
  height: 112px;
  padding: 16px 15px 0;
  display: flex;
  gap: 2px;
  background: #f0f0f0;
  border-bottom: 2px solid #dcdcdd;
}
.tool {
  min-width: 86px;
  padding: 0 15px;
  flex-direction: column;
  justify-content: flex-start;
  font-size: 20px;
  font-weight: 600;
  line-height: 28px;
  color: #8a8f97;
}
.tool svg { width: 56px; height: 56px; }
.tool:nth-of-type(-n+2) svg { color: #6a717c; }
.sep { width: 2px; height: 64px; margin: 8px 5px 0; background: #dadadb; }
.pick {
  height: 64px;
  margin-top: 8px;
  padding: 0 24px 2px;
  gap: 12px;
  font-size: 24px;
  font-weight: 500;
  color: #2563eb;
  border: 2px dashed #2563eb;
  border-radius: 8px;
}

.body { flex: 1; display: flex; }
.rail {
  width: 96px;
  padding-top: 16px;
  display: flex;
  flex-direction: column;
  gap: 8px;
  background: #f0f0f0;
  border-right: 2px solid #dcdcdd;
}
.rail .on { color: #2563eb; background: #e8ecf5; }

/* 3D view */
.viewport { flex: 1; position: relative; display: flex; background: #fff; }
.scene { position: absolute; width: 100%; height: 100%; }
.minor { stroke: #e8e8e8; stroke-width: 1; }
.major { stroke: #cdcdcd; stroke-width: 1.2; }
.axis-x { stroke: #f9703e; stroke-width: 1.5; }
.axis-y { stroke: #58fb24; stroke-width: 1.5; }
.axis-z { stroke: #4f66f5; stroke-width: 2; stroke-opacity: .75; }
.edges { stroke: #4d4e50; stroke-width: 1.8; stroke-linejoin: round; }

/* model panel */
.panel {
  position: relative;
  width: 440px;
  margin: 24px 0 48px 24px;
  display: flex;
  flex-direction: column;
  gap: 16px;
}
.section-head {
  display: flex;
  align-items: center;
  padding: 16px 24px 16px 32px;
  background: rgba(238, 238, 238, .88);
  border: 2px solid #dadadb;
  border-radius: 12px;
  color: #80868f;
}
.section-head h2 {
  flex: 1;
  margin: 0 0 0 24px;
  padding-bottom: 4px;
  font-size: 28px;
  font-weight: 500;
  line-height: 36px;
  color: #5b6470;
}
.mini { width: 48px; height: 48px; color: #8f949c; }
.flip { transform: scaleX(-1); }
.flip .line { stroke-width: 1.5; }
.tree { list-style: none; margin: 0; padding: 0; }
.history { padding-top: 12px; }
.shapes { padding-top: 16px; }
.tree li { height: 64px; padding-right: 24px; display: flex; align-items: center; gap: 8px; }
.tree svg { width: 32px; height: 32px; }
.tree span { line-height: 40px; padding-bottom: 6px; }
.tree .status { margin-left: auto; color: #9ca3af; }
.tree .twist { width: 24px; height: 24px; margin-right: 8px; color: #b4b8be; }
.tree .gray { filter: grayscale(1) opacity(.6); }
.tree .l1 { padding-left: 32px; }
.tree .l2 { padding-left: 64px; }
.tree .l3 { padding-left: 96px; }
.tree .muted { color: #7b818b; }
.tree .selected {
  color: #2563eb;
  background: rgba(37, 99, 235, .1);
  border-left: 4px solid #2563eb;
}
.tree .group { font-weight: 500; color: #5b6470; }
.tree .count { margin-left: 8px; font-weight: 400; color: #a3a7ae; }
.tree .shape { gap: 16px; padding-left: 72px; color: #5b6470; }

/* view controls */
.view-tools {
  position: absolute;
  top: 24px;
  right: 20px;
  width: 160px;
  display: flex;
  flex-direction: column;
  align-items: center;
  gap: 16px;
}
.gizmo { width: 160px; height: 144px; }
.gizmo text { font-size: 24px; text-anchor: middle; fill: #10151c; font-family: Inter, sans-serif; font-weight: 500; }
.gizmo .back { fill: #8d8d8d; }
.round {
  width: 64px;
  height: 64px;
  border: 2px solid #dadadb;
  border-radius: 50%;
  background: rgba(238, 238, 238, .9);
  color: #6f7783;
}
.status-bar {
  position: absolute;
  right: 64px;
  bottom: 48px;
  display: flex;
  gap: 16px;
  font-size: 24px;
  font-weight: 500;
  color: #5b6470;
}
.pill {
  height: 64px;
  display: flex;
  align-items: center;
  border: 2px solid #dadadb;
  border-radius: 16px;
  background: rgba(238, 238, 238, .88);
}
.snap { width: 212px; padding: 0 22px 0 20px; gap: 12px; color: #7b818b; }
.snap label { color: #5b6470; }
.snap input {
  width: 26px;
  padding: 0;
  border: 0;
  background: none;
  font: inherit;
  color: inherit;
}
.lock { margin-left: auto; }
.unit { width: 88px; }
.weigh { width: 64px; margin-left: 8px; border-radius: 12px; }
```
FILE: grid.js
```js
// Ground grid in axonometric projection: one line every unit, a heavier one every ten.
(function () {
  var grid = document.getElementById('grid');
  var left = 96, right = 2880, top = 208, bottom = 1800;
  var origin = { x: 1480, y: 1248 };

  function family(slope, step) {
    var base = origin.y - slope * origin.x;
    var ys = [top - slope * left, top - slope * right, bottom - slope * left, bottom - slope * right];
    var first = Math.ceil((Math.min.apply(null, ys) - base) / step);
    var last = Math.floor((Math.max.apply(null, ys) - base) / step);
    var paths = { minor: '', major: '' };
    for (var k = first; k <= last; k++) {
      var c = base + k * step;
      paths[k % 10 === 0 ? 'major' : 'minor'] +=
        'M' + left + ' ' + (c + slope * left).toFixed(1) + 'L' + right + ' ' + (c + slope * right).toFixed(1);
    }
    return paths;
  }

  var families = [family(0.2267, 19.19), family(-0.4479, 26.96)];
  ['minor', 'major'].forEach(function (kind) {
    families.forEach(function (paths) {
      var path = document.createElementNS('http://www.w3.org/2000/svg', 'path');
      path.setAttribute('class', kind);
      path.setAttribute('d', paths[kind]);
      grid.appendChild(path);
    });
  });
})();
```
